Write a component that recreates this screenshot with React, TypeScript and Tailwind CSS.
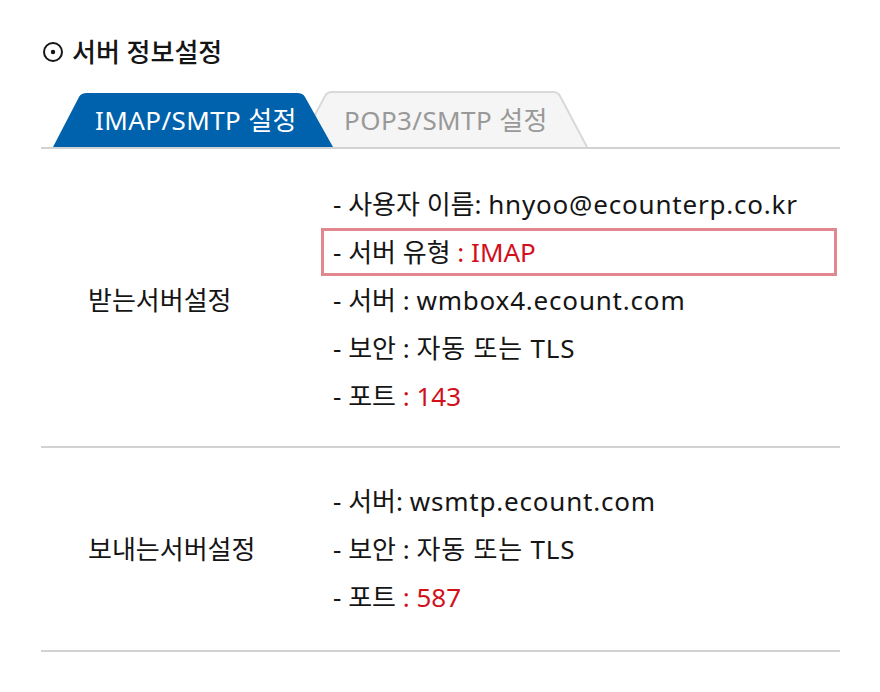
import React from 'react';

const FONT = "font-['Noto_Sans','Noto_Sans_CJK_KR',sans-serif]";

function Tabs() {
    return (
        <div className="relative h-[58px] mt-[20px] border-b-2 border-[#d2d2d2]">
            <svg className="absolute left-0 top-0" width="799" height="56" viewBox="0 0 799 56">
                {/* inactive tab */}
                <path
                    d="M257 56 L284 5 Q286 1 291 1 L512 1 Q517 1 519 5 L546 56"
                    fill="#f5f5f5"
                    stroke="#d9d9d9"
                    strokeWidth="2"
                />
                {/* active tab */}
                <path
                    d="M12 56 L38 6 Q40 2 46 2 L256 2 Q262 2 264 6 L292 56 Z"
                    fill="#0062ad"
                />
            </svg>
            <div className="relative flex items-center h-[56px] pt-[2px]">
                <span className="ml-[35px] w-[240px] text-center text-white text-[26px] tracking-[0.4px]">
                    IMAP/SMTP 설정
                </span>
                <span className="ml-[10px] w-[240px] text-center text-[#999999] text-[26px] tracking-[0.4px]">
                    POP3/SMTP 설정
                </span>
            </div>
        </div>
    );
}

function Item({ label, value, red, box }: { label: string; value: string; red?: boolean; box?: boolean }) {
    return (
        <div
            className={`h-[48px] flex items-center whitespace-pre ${box ? '-ml-[12px] mr-[3px] pl-[9px] border-[3px] border-[#e2878d]' : ''}`}
        >
            <span>
                - {label}
                <span className={red ? 'text-[#d2101c]' : 'tracking-[0.8px]'}>{value}</span>
            </span>
        </div>
    );
}

function Section({ title, pad, children }: { title: string; pad: string; children: React.ReactNode }) {
    return (
        <div className={`grid grid-cols-[292px_1fr] border-b-2 border-[#d2d2d2] ${pad}`}>
            <div className="flex items-center pl-[47px]">{title}</div>
            <div className="flex flex-col">{children}</div>
        </div>
    );
}

export default function App() {
    return (
        <div className={`${FONT} w-[880px] h-[692px] bg-white text-[#151515] text-[26px] pt-[33px] pl-[41px]`}>
            <div className="w-[799px]">
                <div className="flex items-center h-[38px]">
                    <svg width="22" height="22" viewBox="0 0 22 22" className="ml-[1px]">
                        <circle cx="11" cy="11" r="9" fill="none" stroke="#151515" strokeWidth="2" />
                        <circle cx="11" cy="11" r="2.2" fill="#151515" />
                    </svg>
                    <span className="ml-[8px] font-medium">서버 정보설정</span>
                </div>
                <Tabs />
                <Section title="받는서버설정" pad="pt-[31px] pb-[26px]">
                    <Item label="사용자 이름: " value="hnyoo@ecounterp.co.kr" />
                    <Item label="서버 유형 " value=": IMAP" red box />
                    <Item label="서버 : " value="wmbox4.ecount.com" />
                    <Item label="보안 : " value="자동 또는 TLS" />
                    <Item label="포트 " value=": 143" red />
                </Section>
                <Section title="보내는서버설정" pad="pt-[29px] pb-[29px]">
                    <Item label="서버: " value="wsmtp.ecount.com" />
                    <Item label="보안 : " value="자동 또는 TLS" />
                    <Item label="포트 " value=": 587" red />
                </Section>
            </div>
        </div>
    );
}
